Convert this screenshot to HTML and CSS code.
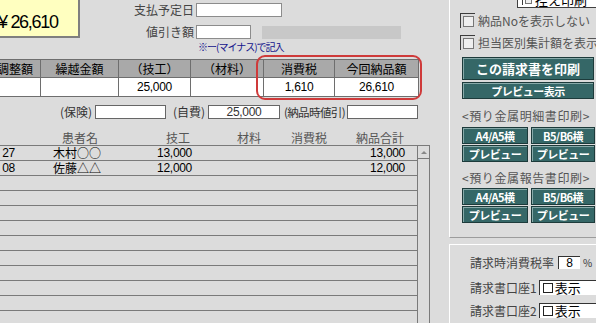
FILE: index.html
```html
<!DOCTYPE html>
<html lang="ja">

<head>
    <meta charset="UTF-8">
    <meta name="viewport" content="width=device-width, initial-scale=1.0">
    <title>請求書</title>
    <link rel="stylesheet" href="styles.css">
</head>

<body>
    <div class="screen">
        <div class="main">
            <!-- 合計と支払情報 -->
            <div class="top">
                <div class="total">¥ 26,610</div>
                <div class="fields">
                    <div class="f-row">
                        <span class="f-label">支払予定日</span>
                        <div class="box w-due"></div>
                    </div>
                    <div class="f-row">
                        <span class="f-label">値引き額</span>
                        <div class="box w-disc"></div>
                        <div class="bar"></div>
                    </div>
                    <div class="note">※ー(マイナス)で記入</div>
                </div>
            </div>

            <!-- 集計 -->
            <table class="summary">
                <colgroup>
                    <col class="c-adj">
                    <col class="c-carry">
                    <col class="c-tech">
                    <col class="c-mat">
                    <col class="c-tax">
                    <col class="c-total">
                </colgroup>
                <tr>
                    <th class="adj">調整額</th>
                    <th>繰越金額</th>
                    <th>（技工）</th>
                    <th>（材料）</th>
                    <th>消費税</th>
                    <th>今回納品額</th>
                </tr>
                <tr>
                    <td></td>
                    <td></td>
                    <td class="num">25,000</td>
                    <td></td>
                    <td class="num">1,610</td>
                    <td class="num">26,610</td>
                </tr>
            </table>
            <div class="mark"></div>

            <div class="sub">
                <span class="lbl">(保険)</span>
                <div class="box"></div>
                <span class="lbl">(自費)</span>
                <div class="box num">25,000</div>
                <span class="lbl tight">(納品時値引)</span>
                <div class="box"></div>
            </div>

            <!-- 明細一覧 -->
            <div class="lhead">
                <span></span>
                <span class="h-name">患者名</span>
                <span class="h-tech">技工</span>
                <span class="h-mat">材料</span>
                <span class="h-tax">消費税</span>
                <span class="h-sum">納品合計</span>
                <span></span>
            </div>
            <div class="list">
                <div class="rows">
                    <div class="row">
                        <span class="date num">27</span>
                        <span class="name">木村○○</span>
                        <span class="r num">13,000</span>
                        <span class="r"></span>
                        <span class="r"></span>
                        <span class="r num">13,000</span>
                        <span></span>
                    </div>
                    <div class="row">
                        <span class="date num">08</span>
                        <span class="name">佐藤△△</span>
                        <span class="r num">12,000</span>
                        <span class="r"></span>
                        <span class="r"></span>
                        <span class="r num">12,000</span>
                        <span></span>
                    </div>
                    <div class="row"></div>
                    <div class="row"></div>
                    <div class="row"></div>
                    <div class="row"></div>
                    <div class="row"></div>
                    <div class="row"></div>
                    <div class="row"></div>
                    <div class="row"></div>
                    <div class="row"></div>
                    <div class="row"></div>
                </div>
                <div class="scroll">
                    <div class="up"></div>
                </div>
            </div>
        </div>

        <div class="side">
            <div class="g1">
                <div class="copy"><span class="cb"><i></i></span>控え印刷</div>
                <div class="opt opt1"><span class="cb"><i></i></span>納品Noを表示しない</div>
                <div class="opt opt2"><span class="cb"><i></i></span>担当医別集計額を表示</div>

                <div class="btn btn-main">この請求書を印刷</div>
                <div class="btn btn-prev">プレビュー表示</div>

                <div class="grp">&lt;預り金属明細書印刷&gt;</div>
                <div class="pair first">
                    <div class="btn">A4/A5横</div>
                    <div class="btn">B5/B6横</div>
                </div>
                <div class="pair">
                    <div class="btn">プレビュー</div>
                    <div class="btn">プレビュー</div>
                </div>

                <div class="grp grp2">&lt;預り金属報告書印刷&gt;</div>
                <div class="pair first2">
                    <div class="btn">A4/A5横</div>
                    <div class="btn">B5/B6横</div>
                </div>
                <div class="pair">
                    <div class="btn">プレビュー</div>
                    <div class="btn">プレビュー</div>
                </div>
            </div>

            <div class="g2">
                <div class="rate">
                    <span class="rate-label">請求時消費税率</span>
                    <div class="rate-box num">8</div>
                    <span class="pct">%</span>
                </div>
                <div class="acct">
                    <span class="acct-label">請求書口座1</span>
                    <div class="acct-box"><span class="sq"></span>表示</div>
                </div>
                <div class="acct acct2">
                    <span class="acct-label">請求書口座2</span>
                    <div class="acct-box"><span class="sq"></span>表示</div>
                </div>
            </div>
        </div>
    </div>
</body>

</html>
```

FILE: styles.css
```css
* {
    margin: 0;
    padding: 0;
    box-sizing: border-box;
}

body {
    background: #dcdcdc;
    color: #000;
    font-family: "Noto Sans CJK JP", sans-serif;
    font-size: 12px;
    width: 596px;
    height: 323px;
    overflow: hidden;
}

.num {
    font-family: "Liberation Sans", "Noto Sans CJK JP", sans-serif;
    letter-spacing: -0.3px;
}

.screen {
    display: flex;
    height: 323px;
}

.main {
    width: 449px;
    flex: none;
    position: relative;
    overflow: hidden;
}

.side {
    width: 147px;
    flex: none;
    display: flex;
    flex-direction: column;
}

/* 上段 */
.top {
    display: flex;
    align-items: flex-start;
    height: 59px;
}

.total {
    width: 80px;
    height: 38px;
    flex: none;
    background: #ffffc0;
    border-right: 2px solid #7f7f7f;
    border-bottom: 2px solid #7f7f7f;
    font-family: "Liberation Sans", sans-serif;
    font-size: 18px;
    line-height: 18px;
    padding-top: 13px;
    letter-spacing: -1.3px;
    text-indent: -2px;
    white-space: nowrap;
    overflow: hidden;
}

.fields {
    margin-left: 40px;
    padding-top: 3px;
    color: #444;
}

.f-row {
    display: flex;
    align-items: center;
    height: 14px;
}

.f-row+.f-row {
    margin-top: 8px;
}

.f-label {
    width: 76px;
    padding-right: 2px;
    text-align: right;
    line-height: 14px;
    white-space: nowrap;
}

.box {
    height: 14px;
    background: #fff;
    border: 1px solid #8c8c8c;
}

.w-due {
    width: 86px;
}

.w-disc {
    width: 55px;
}

.bar {
    width: 139px;
    height: 13px;
    margin-left: 11px;
    background: #c8c8c8;
}

.note {
    margin: 2px 0 0 78px;
    font-size: 10px;
    line-height: 11px;
    letter-spacing: -1px;
    color: #14148c;
    white-space: nowrap;
}

/* 集計表 */
.summary {
    margin-left: -10px;
    width: 428px;
    table-layout: fixed;
    border-collapse: collapse;
}

.c-adj {
    width: 50px;
}

.c-carry {
    width: 78px;
}

.c-tech {
    width: 72px;
}

.c-mat {
    width: 73px;
}

.c-tax {
    width: 71px;
}

.c-total {
    width: 84px;
}

.summary th,
.summary td {
    border: 1px solid #6e6e6e;
    font-weight: normal;
    text-align: center;
    padding: 0;
    white-space: nowrap;
    overflow: hidden;
}

.summary th {
    height: 18px;
    line-height: 16px;
    background: #a9a9a9;
}

.summary th.adj {
    text-align: right;
    padding-right: 7px;
}

.summary td {
    height: 19px;
    line-height: 17px;
    background: #fff;
}

.mark {
    position: absolute;
    left: 256px;
    top: 55px;
    width: 166px;
    height: 45px;
    border: 2px solid #cf3a3a;
    border-radius: 9px;
}

/* 保険・自費 */
.sub {
    display: grid;
    grid-template-columns: 95px 71px 42px 72px 67px 71px;
    align-items: center;
    height: 14px;
    margin-top: 8px;
    color: #333;
}

.sub .lbl {
    text-align: right;
    padding-right: 3px;
    line-height: 14px;
    white-space: nowrap;
}

.sub .lbl.tight {
    padding-right: 2px;
    font-size: 11.5px;
    letter-spacing: -0.6px;
}

.sub .box {
    border-color: #666;
    text-align: center;
    line-height: 12px;
}

/* 明細 */
.lhead,
.row {
    display: grid;
    grid-template-columns: 16px 124px 52px 70px 68px 75px 12px;
}

.lhead {
    height: 14px;
    margin-top: 12px;
    line-height: 14px;
    color: #555;
    white-space: nowrap;
}

.h-name {
    padding-left: 46px;
}

.h-tech,
.h-mat,
.h-tax,
.h-sum {
    text-align: right;
}

.h-tech {
    padding-right: 2px;
}

.h-mat {
    padding-right: 1px;
}

.h-tax {
    padding-right: 3px;
}

.h-sum {
    padding-right: 1px;
}

.list {
    display: flex;
    height: 179px;
}

.rows {
    width: 417px;
    border-top: 1px solid #7a7a7a;
}

.row {
    height: 15px;
    line-height: 14px;
    border-bottom: 1px solid #7a7a7a;
    white-space: nowrap;
}

.date {
    display: flex;
    justify-content: flex-end;
    padding-right: 1px;
}

.name {
    padding-left: 37px;
}

.r {
    text-align: right;
}

.scroll {
    width: 13px;
    border: 1px solid #7a7a7a;
    border-bottom: 0;
}

.up {
    height: 13px;
    border-bottom: 1px solid #7a7a7a;
    display: flex;
    align-items: center;
    justify-content: center;
}

.up::before {
    content: "";
    border-left: 3px solid transparent;
    border-right: 3px solid transparent;
    border-bottom: 3px solid #888;
}

/* 右パネル */
.g1 {
    height: 238px;
    border-left: 1px solid #fff;
    border-bottom: 1px solid #9c9c9c;
    padding-left: 10px;
    display: flex;
    flex-direction: column;
    align-items: flex-start;
    color: #555;
}

.copy {
    margin: -8px 0 0 57px;
    width: 80px;
    height: 16px;
    display: flex;
    align-items: center;
    gap: 2px;
    padding-left: 4px;
    background: #fff;
    border-left: 1px solid #404040;
    border-bottom: 1px solid #404040;
    color: #000;
    font-size: 13px;
    line-height: 14px;
    white-space: nowrap;
}

.copy .cb {
    width: 11px;
    height: 11px;
}

.opt {
    display: flex;
    align-items: center;
    gap: 3px;
    height: 15px;
    line-height: 15px;
    white-space: nowrap;
}

.opt1 {
    margin-top: 5px;
}

.opt2 {
    margin-top: 7px;
}

.cb {
    width: 15px;
    height: 15px;
    flex: none;
    display: flex;
    padding: 2px 1px 1px 2px;
    border-top: 1px solid #3c3c3c;
    border-left: 1px solid #3c3c3c;
}

.cb i {
    flex: 1;
    border: 1px solid #777;
    background: #efefef;
}

.btn {
    display: flex;
    align-items: center;
    justify-content: center;
    background: #356767;
    border: 1px solid #1d3b3b;
    box-shadow: inset 1px 1px 0 #88aaaa;
    color: #fff;
    font-weight: bold;
    white-space: nowrap;
}

.btn-main {
    margin: 7px 0 0 2px;
    width: 132px;
    height: 23px;
    font-size: 13px;
}

.btn-prev {
    margin: 2px 0 0 2px;
    width: 132px;
    height: 17px;
    font-size: 11px;
    letter-spacing: -0.5px;
}

.grp {
    margin: 10px 0 0 2px;
    height: 14px;
    line-height: 14px;
    font-size: 12px;
    letter-spacing: 0.6px;
    white-space: nowrap;
}

.grp2 {
    margin-top: 9px;
}

.pair {
    display: flex;
    gap: 3px;
    margin: 1px 0 0 2px;
}

.pair.first {
    margin-top: 4px;
}

.pair.first2 {
    margin-top: 3px;
}

.pair .btn {
    width: 66px;
    height: 17px;
    font-size: 11px;
    letter-spacing: -0.5px;
}

.pair .btn+.btn {
    width: 64px;
}

.g2 {
    flex: 1;
    margin-top: 6px;
    padding: 11px 0 0 20px;
    border-top: 1px solid #fff;
    border-left: 1px solid #fff;
    color: #444;
}

.rate {
    display: flex;
    align-items: center;
    height: 13px;
}

.rate-label,
.acct-label {
    white-space: nowrap;
    line-height: 14px;
}

.rate-label {
    width: 88px;
}

.rate-box {
    width: 22px;
    height: 13px;
    background: #fff;
    border-top: 1px solid #333;
    border-left: 1px solid #333;
    color: #000;
    text-align: center;
    line-height: 12px;
}

.pct {
    margin-left: 3px;
    font-size: 10px;
    color: #333;
}

.acct {
    display: flex;
    align-items: center;
    height: 15px;
    margin-top: 11px;
}

.acct2 {
    margin-top: 8px;
}

.acct-label {
    width: 72px;
}

.acct-box {
    width: 60px;
    height: 15px;
    display: flex;
    align-items: center;
    gap: 2px;
    padding-left: 3px;
    background: #fff;
    border-top: 1px solid #333;
    border-left: 1px solid #333;
    color: #000;
    font-size: 13px;
    line-height: 14px;
}

.sq {
    width: 10px;
    height: 10px;
    border: 1px solid #222;
    background: #fff;
}
```
